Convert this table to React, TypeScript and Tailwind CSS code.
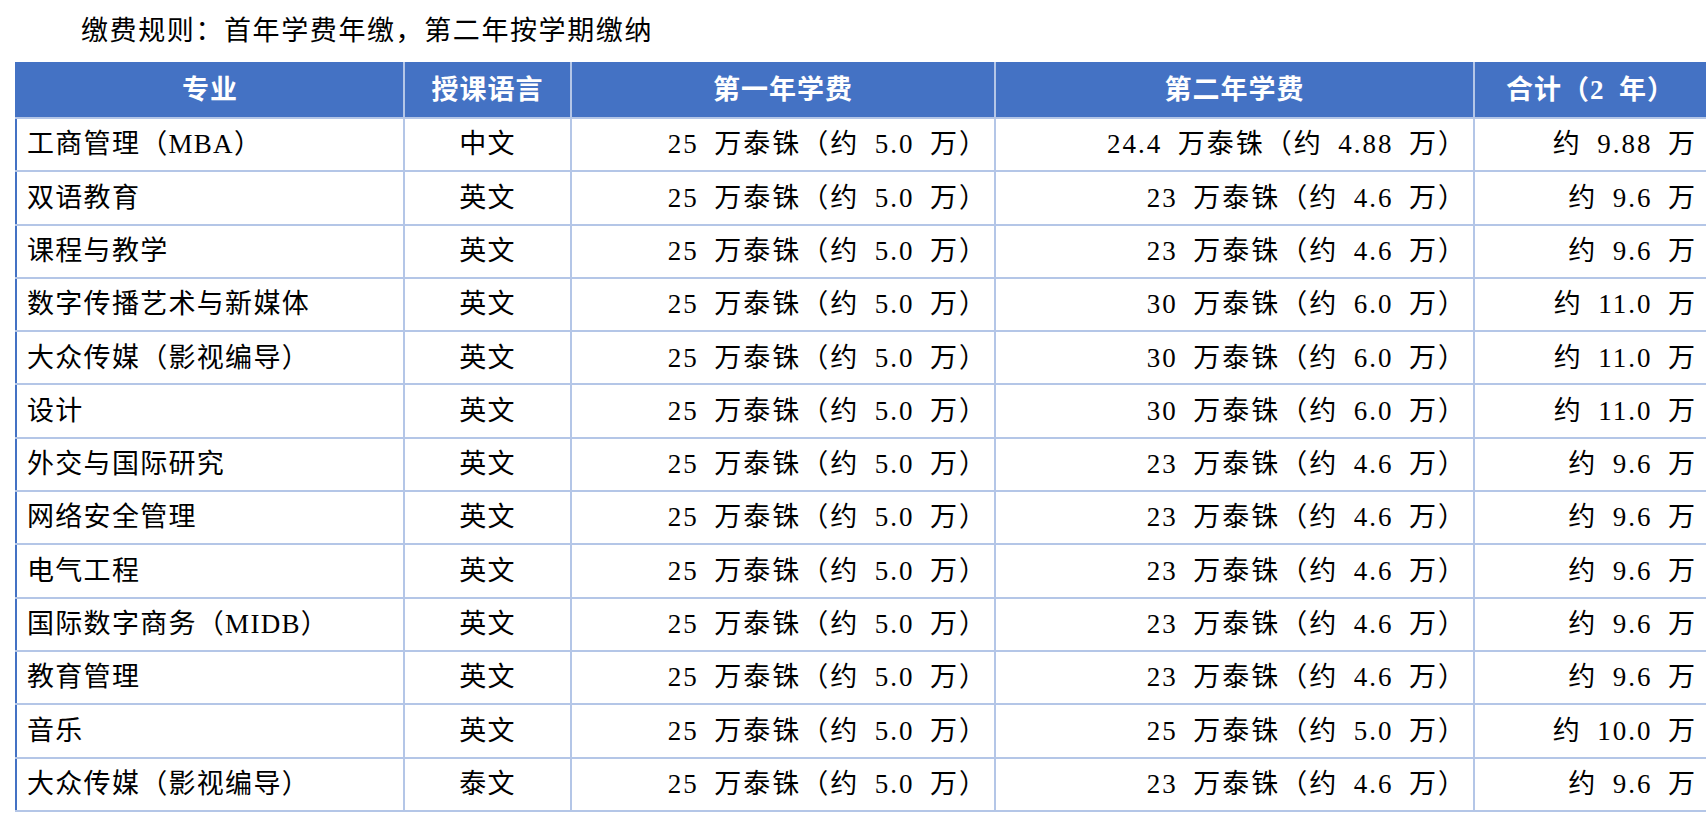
import React from 'react';

// 学费表：首年年缴，第二年按学期缴纳
const FEE_25 = '25 万泰铢（约 5.0 万）';
const FEE_23 = '23 万泰铢（约 4.6 万）';
const FEE_30 = '30 万泰铢（约 6.0 万）';

const headers = ['专业', '授课语言', '第一年学费', '第二年学费', '合计（2 年）'];

const rows: string[][] = [
  ['工商管理（MBA）', '中文', FEE_25, '24.4 万泰铢（约 4.88 万）', '约 9.88 万'],
  ['双语教育', '英文', FEE_25, FEE_23, '约 9.6 万'],
  ['课程与教学', '英文', FEE_25, FEE_23, '约 9.6 万'],
  ['数字传播艺术与新媒体', '英文', FEE_25, FEE_30, '约 11.0 万'],
  ['大众传媒（影视编导）', '英文', FEE_25, FEE_30, '约 11.0 万'],
  ['设计', '英文', FEE_25, FEE_30, '约 11.0 万'],
  ['外交与国际研究', '英文', FEE_25, FEE_23, '约 9.6 万'],
  ['网络安全管理', '英文', FEE_25, FEE_23, '约 9.6 万'],
  ['电气工程', '英文', FEE_25, FEE_23, '约 9.6 万'],
  ['国际数字商务（MIDB）', '英文', FEE_25, FEE_23, '约 9.6 万'],
  ['教育管理', '英文', FEE_25, FEE_23, '约 9.6 万'],
  ['音乐', '英文', FEE_25, FEE_25, '约 10.0 万'],
  ['大众传媒（影视编导）', '泰文', FEE_25, FEE_23, '约 9.6 万'],
];

// half-width spaces as wide as a digit, like the original font
const wide = (s: string) => s.replace(/ /g, '\u2002');

const cellAlign = [
  'text-left pl-[10px] tracking-[1.3px]',
  'text-center tracking-[1.3px]',
  'text-right pr-[6px] tracking-[2px]',
  'text-right pr-[6px] tracking-[2px]',
  'text-right pr-[9px] tracking-[2px]',
];

const edge = (i: number) =>
  i === 0 ? 'border-l-[#4472c4]' : i === headers.length - 1 ? 'border-r-[#4472c4]' : '';

const App: React.FC = () => {
  return (
    <div
      className="w-[1706px] h-[816px] bg-white text-black overflow-hidden"
      style={{ fontFamily: '"Liberation Serif", "Noto Sans CJK SC", serif' }}
    >
      <div className="h-[62px] flex items-center pl-[81px] text-[27px] tracking-[1.6px]">
        缴费规则：首年学费年缴，第二年按学期缴纳
      </div>

      <table className="ml-[15px] w-[1691px] table-fixed border-collapse text-[27px] tracking-[1px]">
        <colgroup>
          <col className="w-[388px]" />
          <col className="w-[167px]" />
          <col className="w-[424px]" />
          <col className="w-[479px]" />
          <col className="w-[233px]" />
        </colgroup>
        <thead>
          <tr className="h-[55px] bg-[#4472c4]">
            {headers.map((h, i) => (
              <th
                key={h}
                className={`border-2 border-[#b4c6e7] border-t-[#4472c4] ${edge(i)} text-center font-bold text-white p-0 whitespace-nowrap`}
              >
                {wide(h)}
              </th>
            ))}
          </tr>
        </thead>
        <tbody>
          {rows.map((r, ri) => (
            <tr key={ri} className="h-[53.3px]">
              {r.map((c, ci) => (
                <td
                  key={ci}
                  className={`border-2 border-[#b4c6e7] ${edge(ci)} ${cellAlign[ci]} py-0 whitespace-nowrap`}
                >
                  {wide(c)}
                </td>
              ))}
            </tr>
          ))}
        </tbody>
      </table>
    </div>
  );
};

export default App;
